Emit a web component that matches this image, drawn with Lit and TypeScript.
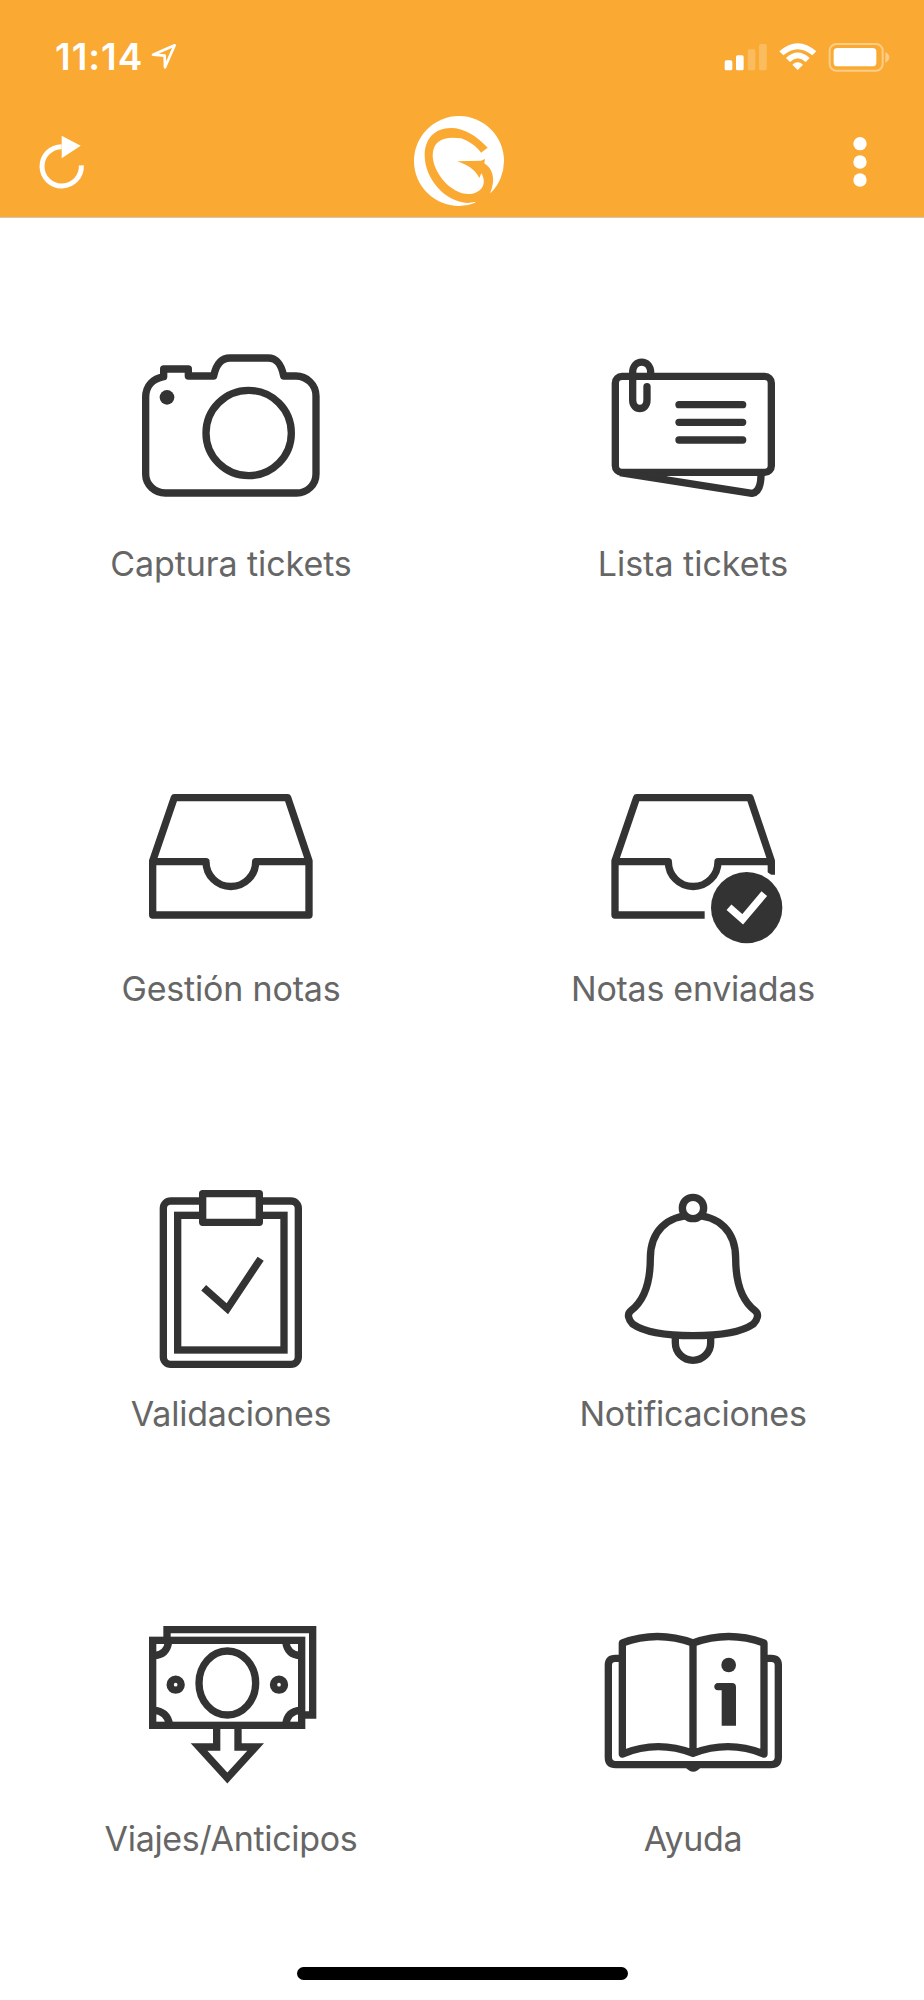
import { LitElement, html, css, svg } from "lit";
import { customElement, property } from "lit/decorators.js";
import { styleMap } from "lit/directives/style-map.js";

const camera = svg`
  <path d="M221 110V87H295V108H371C378 74 392 54 420 54H534C562 54 574 74 581 108H618C650 108 678 134 678 168V402C678 434 652 459 620 459H226C194 459 167 434 167 402V172C167 136 190 116 221 110Z"/>
  <circle cx="476" cy="279" r="128"/>
  <circle class="solid" cx="231" cy="172" r="22"/>`;

const tickets = svg`
  <rect x="136" y="109" width="468" height="288" rx="20"/>
  <path d="M150 398L546 460Q574 456 573 398"/>
  <path class="solid" d="M150 398H300L285 418Z"/>
  <path d="M242 108V98C242 56 188 56 188 98V180C188 214 231 214 231 180V140" stroke-linecap="round"/>
  <path d="M327 194H518M327 247H518M327 300H518" stroke-linecap="round"/>`;

const tray = svg`
  <path d="M158 243L223 53H563L627 243V405H158ZM158 245H318A74.500 74.500 0 0 0 467 245H627"/>`;

const traySent = svg`
  <path d="M434 405H165V243L230 53H570L634 243V284M165 245H325A74.500 74.500 0 0 0 474 245H634"/>
  <circle class="halo" cx="560" cy="383" r="115"/>
  <circle class="solid" cx="560" cy="383" r="107"/>
  <path class="tick" d="M507 382L548 418L613 341"/>`;

const clipboard = svg`
  <rect x="160" y="63" width="405" height="490" rx="22"/>
  <rect x="203" y="106" width="319" height="404" stroke-linejoin="miter"/>
  <rect class="paper" x="278" y="41" width="170" height="86"/>
  <path d="M281 323L352 386L452 236" stroke-linejoin="miter"/>`;

const bell = svg`
  <path d="M399 106C320 106 271 155 271 235C271 310 252 362 213 392C200 402 205 418 218 432C255 458 330 467 399 467C468 467 543 458 580 432C593 418 598 402 585 392C546 362 527 310 527 235C527 155 478 106 399 106Z"/>
  <circle class="paper" cx="399" cy="84" r="32"/>
  <path d="M346 467V488A53 53 0 0 0 452 488V467"/>`;

const cash = svg`
  <g stroke-linejoin="miter">
    <path d="M231 90V59H668V315H638"/>
    <rect x="188" y="91" width="447" height="255"/>
    <path d="M190 137Q231 136 236 94M633 137Q592 136 587 94M190 301Q231 302 239 344M633 301Q592 302 587 344"/>
    <ellipse cx="412" cy="219" rx="85" ry="96"/>
    <circle cx="257" cy="224" r="16.500"/>
    <circle cx="567" cy="224" r="16.500"/>
    <path d="M380 348V411H327L412 504L497 411H444V348"/>
  </g>`;

const book = svg`
  <path d="M156 145H136Q115 145 115 166V442Q115 464 137 464H603Q625 464 625 442V166Q625 145 604 145H582"/>
  <path d="M157 432V99Q262 60 369 99Q477 60 582 99V432Q477 389 369 430Q262 389 157 432ZM369 99V430"/>
  <path class="solid" d="M345 470H394Q370 500 345 470Z"/>
  <circle class="solid" cx="476" cy="165" r="22"/>
  <path class="solid" d="M444 219H486Q498 219 498 231V347H455V241H444C429 241 429 219 444 219Z"/>`;

@customElement("menu-tile")
class MenuTile extends LitElement {
  @property() label = "";
  @property() box = "";
  @property({ type: Number }) tracking = 0;
  @property({ attribute: false }) art: unknown;

  static styles = css`
    :host {
      display: flex;
      flex-direction: column;
      align-items: center;
      height: 425px;
    }
    .icon {
      display: block;
      width: 240px;
      height: 200px;
      flex: none;
      fill: none;
      stroke: #333;
      stroke-width: 22;
      stroke-linejoin: round;
    }
    .solid { fill: #333; stroke: none; }
    .paper { fill: #fff; }
    .halo { fill: none; stroke: #fff; stroke-width: 16; }
    .tick { stroke: #fff; stroke-width: 22; stroke-linejoin: miter; }
    .label {
      margin-top: 17px;
      font: 400 34px/42px Inter, "Liberation Sans", sans-serif;
      color: #666;
      white-space: nowrap;
    }
  `;

  render() {
    return html`
      <svg class="icon" viewBox=${this.box} aria-hidden="true">${this.art}</svg>
      <span class="label" style=${styleMap({ letterSpacing: `${this.tracking}px` })}>${this.label}</span>`;
  }
}

@customElement("app-root")
class AppRoot extends LitElement {
  static styles = css`
    :host {
      display: flex;
      flex-direction: column;
      width: 924px;
      height: 2000px;
      background: #fff;
      font-family: Inter, "Liberation Sans", sans-serif;
      overflow: hidden;
    }
    header {
      box-sizing: border-box;
      height: 218px;
      flex: none;
      background: #faaa32;
      border-bottom: 1px solid #cfc8c0;
      color: #fff;
    }
    svg { display: block; fill: currentColor; }
    .status {
      display: flex;
      align-items: center;
      height: 114px;
      margin-bottom: -2px;
      padding: 0 33px 0 55px;
    }
    .time {
      width: 96px;
      font-size: 37px;
      font-weight: 600;
      line-height: 44px;
      letter-spacing: 1px;
      white-space: nowrap;
    }
    .signals { margin-left: auto; }
    .bar {
      display: grid;
      grid-template-columns: 1fr auto 1fr;
      align-items: start;
      padding: 0 54px 0 38px;
    }
    .logo { margin: 0 -5px 0 5px; }
    .menu { justify-self: end; }
    main {
      display: grid;
      grid-template-columns: 1fr 1fr;
      padding-top: 108px;
      height: 1700px;
      flex: none;
    }
    footer { display: flex; justify-content: center; margin-top: -59px; }
    .home { width: 331px; height: 13px; border-radius: 7px; background: #000; }
  `;

  private tiles = [
    { label: "Captura tickets", tracking: -0.08, box: "63 -42 720 600", art: camera },
    { label: "Lista tickets", tracking: 0, box: "9 -42 720 600", art: tickets },
    { label: "Gestión notas", tracking: -0.18, box: "33 -87 720 600", art: tray },
    { label: "Notas enviadas", tracking: -0.27, box: "39 -87 720 600", art: traySent },
    { label: "Validaciones", tracking: -0.22, box: "3 -12 720 600", art: clipboard },
    { label: "Notificaciones", tracking: -0.27, box: "39 -12 720 600", art: bell },
    { label: "Viajes/Anticipos", tracking: -0.32, box: "63 -27 720 600", art: cash },
    { label: "Ayuda", tracking: -0.4, box: "9 -27 720 600", art: book },
  ];

  render() {
    return html`
      <header>
        <div class="status">
          <span class="time">11:14</span>
          <svg width="27" height="28" viewBox="453 70 81 84">
            <path d="M459 105L524 77L495 143L494 108Z" fill="none" stroke="#fff" stroke-width="8" stroke-linejoin="round"/>
          </svg>
          <svg class="signals" width="168" height="32" viewBox="98 62 504 96">
            <rect x="103" y="120" width="23" height="30" rx="5"/>
            <rect x="137" y="105" width="23" height="45" rx="5"/>
            <g opacity=".22">
              <rect x="172" y="87" width="23" height="63" rx="5"/>
              <rect x="206" y="71" width="23" height="79" rx="5"/>
            </g>
            <path d="M267 93Q322 44 378 93L366 105Q322 68 279 105Z"/>
            <path d="M287 113Q322 80 358 113L346 125Q322 103 299 125Z"/>
            <path d="M306 133Q322 119 338 133L322 149Z"/>
            <rect x="418" y="71" width="159" height="80" rx="20" fill="none" stroke="#fff" stroke-width="6" opacity=".42"/>
            <rect x="430" y="83" width="128" height="55" rx="11"/>
            <path d="M585 96Q597 102 597 111Q597 121 585 127Z" opacity=".42"/>
          </svg>
        </div>
        <div class="bar">
          <svg width="48" height="88" viewBox="114 276 144 264">
            <path d="M244 436A59 59 0 1 1 185 380" fill="none" stroke="#fff" stroke-width="15"/>
            <path d="M185 347L242 377L185 415Z"/>
          </svg>
          <svg class="logo" width="96" height="102" viewBox="65 36 288 306">
            <circle cx="209" cy="183" r="135"/>
            <path fill="#faaa32" d="M295 143C262 108 225 84 185 84C135 84 106 118 106 165C106 235 165 305 235 309L257 306L270 332L335 305L303 278C320 238 310 205 285 190L287 177L275 182L204 184C235 196 258 208 270 234L276 220C291 245 285 275 245 282C190 288 130 220 130 165C132 120 165 108 215 115C240 123 262 140 275 158Z"/>
          </svg>
          <svg class="menu" width="20" height="88" viewBox="479 276 60 264">
            <circle cx="509" cy="371" r="20"/>
            <circle cx="509" cy="426" r="20"/>
            <circle cx="509" cy="480" r="20"/>
          </svg>
        </div>
      </header>
      <main>
        ${this.tiles.map(t => html`<menu-tile .label=${t.label} .tracking=${t.tracking} .box=${t.box} .art=${t.art}></menu-tile>`)}
      </main>
      <footer><div class="home"></div></footer>`;
  }
}
